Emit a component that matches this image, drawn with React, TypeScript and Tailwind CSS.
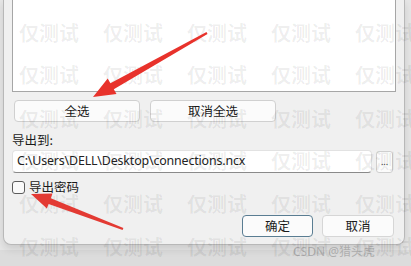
import React from "react";

const wmRows = [24, 66, 110, 152, 195, 238];
const wmCols = [19, 103, 187, 271, 355];

function Watermarks() {
  return (
    <div className="pointer-events-none absolute inset-0">
      {wmRows.map((y) =>
        wmCols.map((x) => (
          <span
            key={`${x}-${y}`}
            className="absolute text-[20px] leading-[20px] font-bold text-black/[0.07] whitespace-nowrap"
            style={{ left: x, top: y }}
          >
            仅测试
          </span>
        ))
      )}
    </div>
  );
}

function Arrows() {
  return (
    <svg className="pointer-events-none absolute inset-0" width="411" height="266" viewBox="0 0 411 266">
      <polygon
        fill="#e8322b"
        points="206.5,32.1 110.4,83.2 107.7,78.4 93,97 116.5,94 113.8,89.2 207.5,33.9"
      />
      <polygon
        fill="#e33a33"
        points="123.4,228.1 50.8,198.3 52.5,193.6 31,194 46.9,208.6 48.6,203.9 122.6,229.9"
      />
    </svg>
  );
}

export default function App() {
  return (
    <div className="relative w-[411px] h-[266px] overflow-hidden bg-[#dcdcdc] font-['Noto_Sans','Noto_Sans_CJK_SC',sans-serif] text-[#1a1a1a]">
      <div className="absolute inset-x-0 top-0 h-[250px] bg-[#e6e6e6]" />
      <div className="relative ml-[3px] mr-[6px] h-[245px] bg-[#f0f0f0] border-x border-b border-[#b8b8b8] rounded-b-[8px] shadow-[0_4px_8px_rgba(0,0,0,0.12)] pl-[8px] pr-[8px] flex flex-col">
        <div className="h-[92px] bg-white border-x border-b border-[#a6a6a6]" />

        <div className="mt-[8px] flex gap-[10px] pl-[2px]">
          <button className="w-[126px] h-[22px] bg-[#fbfbfb] border border-[#d0d0d0] rounded-[4px] text-[12.5px] leading-none font-['Noto_Sans_CJK_SC',sans-serif]">
            全选
          </button>
          <button className="w-[126px] h-[22px] bg-[#fbfbfb] border border-[#d0d0d0] rounded-[4px] text-[12.5px] leading-none font-['Noto_Sans_CJK_SC',sans-serif]">
            取消全选
          </button>
        </div>

        <div className="mt-[10px] h-[16px] text-[12.5px] leading-[16px] font-['Noto_Sans_CJK_SC',sans-serif]">
          导出到:
        </div>

        <div className="mt-[2px] flex items-center gap-[4px]">
          <div className="w-[360px] h-[23px] bg-white border border-[#e2e2e2] border-b-[#8a8a8a] rounded-[4px] pl-[4px] flex items-center text-[12.4px] leading-none text-[#222] font-['Noto_Sans',sans-serif] tracking-[-0.15px]">
            C:\Users\DELL\Desktop\connections.ncx
          </div>
          <button className="w-[17px] h-[22px] bg-[#fbfbfb] border border-[#cfcfcf] rounded-[3px] text-[9px] leading-none text-[#333] flex items-center justify-center">
            ...
          </button>
        </div>

        <div className="mt-[7px] flex items-center gap-[4px]">
          <div className="w-[13px] h-[13px] border border-[#5c5c5c] rounded-[3px] bg-[#fafafa]" />
          <span className="text-[12.5px] leading-[14px] font-['Noto_Sans_CJK_SC',sans-serif]">导出密码</span>
        </div>

        <div className="mt-[21px] flex justify-end gap-[9px] pr-[2px]">
          <button className="w-[71px] h-[22px] bg-[#fbfbfb] border border-[#5a7d92] rounded-[4px] text-[12.5px] leading-none font-['Noto_Sans_CJK_SC',sans-serif]">
            确定
          </button>
          <button className="w-[72px] h-[22px] bg-[#fbfbfb] border border-[#d6d6d6] rounded-[4px] text-[12.5px] leading-none font-['Noto_Sans_CJK_SC',sans-serif]">
            取消
          </button>
        </div>
      </div>

      <div className="absolute left-[293px] top-[244px] text-[12px] leading-[16px] text-[#9a9a9a]/70 whitespace-nowrap">
        CSDN @猎头虎
      </div>

      <Watermarks />
      <Arrows />
    </div>
  );
}
